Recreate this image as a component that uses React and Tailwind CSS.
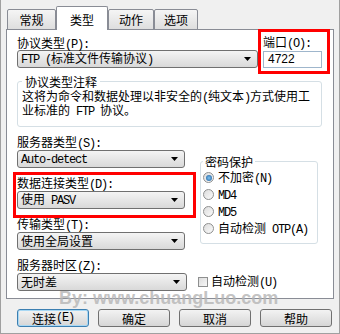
import React from 'react';

// ASCII runs are drawn in a narrow mono face, like the half-width glyphs of the original
const Txt = ({ s }) =>
  s.split(/([\x20-\x7e]+)/).map((part, i) =>
    /^[\x20-\x7e]+$/.test(part) ? (
      <span key={i} className="font-['Liberation_Mono',monospace] text-[12px] tracking-[-1.2px] whitespace-pre">
        {part}
      </span>
    ) : (
      part
    )
  );

const Tab = ({ label, active, w }) => (
  <div
    className={`flex items-center justify-center border border-[#898c95] rounded-t-[2px] ${w} ${
      active ? 'relative z-10 h-[24px] bg-white border-b-0 pt-[1px]' : 'h-[21px] bg-linear-to-b from-[#f5f5f5] to-[#dedede]'
    }`}
  >
    {label}
  </div>
);

const Select = ({ text, className = '' }) => (
  <div className={`flex items-center h-[18px] rounded-[3px] border border-[#707070] bg-linear-to-b from-[#f4f4f4] to-[#d9d9d9] pl-[3px] pr-[6px] ${className}`}>
    <span className="flex-1 whitespace-nowrap overflow-hidden leading-[16px]">
      <Txt s={text} />
    </span>
    <svg width="7" height="4" viewBox="0 0 7 4">
      <path d="M0 0h7L3.5 4z" fill="#000" />
    </svg>
  </div>
);

const Radio = ({ label, checked }) => (
  <div className="flex items-center h-[17px] gap-[4px]">
    <span className="flex items-center justify-center w-[11px] h-[11px] rounded-full border border-[#8e8f8f] bg-linear-to-br from-[#dcdcdc] to-[#fbfbfb]">
      {checked && <span className="w-[6px] h-[6px] rounded-full bg-radial from-[#7fc3f2] to-[#185c9a]" />}
    </span>
    <span>
      <Txt s={label} />
    </span>
  </div>
);

const Button = ({ label, focused }) => (
  <div
    className={`flex items-center justify-center w-[72px] h-[18px] rounded-[3px] border bg-linear-to-b from-[#f3f3f3] to-[#d6d6d6] ${
      focused ? 'border-[#3c7fb1] shadow-[inset_0_0_0_1px_#a8d8f4]' : 'border-[#707070]'
    }`}
  >
    <Txt s={label} />
  </div>
);

const App = () => {
  return (
    <div className="relative w-[340px] h-[334px] overflow-hidden bg-[#f0f0f0] border-x border-b border-[#a0a0a0] font-['Noto_Sans_CJK_SC',sans-serif] text-[12px] leading-[13px] text-black">
      {/* tabs */}
      <div className="flex items-end h-[30px] pl-[6px]">
        <Tab label="常规" w="w-[49px]" />
        <Tab label="类型" w="w-[52px]" active />
        <Tab label="动作" w="w-[46px]" />
        <Tab label="选项" w="w-[44px]" />
      </div>

      {/* tab panel */}
      <div className="-mt-px mx-[5px] h-[270px] border border-[#898c95] bg-white px-[10px]">
        <div className="flex">
          <div className="w-[241px]">
            <div className="mt-[6px] h-[14px]">
              <Txt s="协议类型(P):" />
            </div>
            <Select text="FTP (标准文件传输协议)" />
          </div>
          <div className="ml-[5px]">
            <div className="mt-[5px] h-[14px]">
              <Txt s="端口(O):" />
            </div>
            <div className="mt-[2px] w-[59px] h-[17px] border border-[#9fb6cc] bg-white pl-[4px] flex items-center font-['Liberation_Sans',sans-serif]">
              4722
            </div>
          </div>
        </div>

        <fieldset className="mt-[7px] w-[305px] h-[52px] border border-[#d5dfe5] rounded-[3px] px-[4px]">
          <legend className="px-[3px] leading-[13px]">协议类型注释</legend>
          <div className="mt-[2px] leading-[12px]">
            这将为命令和数据处理以非安全的<Txt s="(" />纯文本<Txt s=")" />方式使用工
            <br />
            业标准的<Txt s=" FTP " />协议。
          </div>
        </fieldset>

        <div className="flex mt-[6px]">
          <div className="w-[168px]">
            <div className="mt-[2px] h-[13px]">
              <Txt s="服务器类型(S):" />
            </div>
            <Select text="Auto-detect" className="mt-[2px]" />
            <div className="mt-[8px] h-[13px]">
              <Txt s="数据连接类型(D):" />
            </div>
            <Select text="使用 PASV" className="mt-[2px]" />
            <div className="mt-[8px] h-[13px]">
              <Txt s="传输类型(T):" />
            </div>
            <Select text="使用全局设置" className="mt-[2px]" />
            <div className="mt-[8px] h-[13px]">
              <Txt s="服务器时区(Z):" />
            </div>
            <Select text="无时差" className="mt-[2px] w-[170px]" />
          </div>

          <div className="ml-[13px] flex flex-col">
            <fieldset className="mt-[22px] ml-[2px] w-[118px] h-[89px] border border-[#d5dfe5] rounded-[3px] pl-[2px]">
              <legend className="px-[2px]">密码保护</legend>
              <div className="mt-[1px]">
                <Radio label="不加密(N)" checked />
                <Radio label="MD4" />
                <Radio label="MD5" />
                <Radio label="自动检测 OTP(A)" />
              </div>
            </fieldset>
            <div className="mt-auto h-[18px] flex items-center gap-[3px]">
              <span className="w-[10px] h-[10px] border border-[#8e8f8f] bg-linear-to-br from-[#dcdcdc] to-[#f8f8f8]" />
              <span>
                <Txt s="自动检测(U)" />
              </span>
            </div>
          </div>
        </div>
      </div>

      {/* buttons */}
      <div className="flex gap-[9px] pl-[16px] mt-[10px]">
        <Button label="连接(E)" focused />
        <Button label="确定" />
        <Button label="取消" />
        <Button label="帮助" />
      </div>

      {/* annotation boxes */}
      <div className="absolute left-[257px] top-[29px] w-[72px] h-[45px] border-[3px] border-[#ff0000]" />
      <div className="absolute left-[12px] top-[172px] w-[183px] h-[46px] border-[3px] border-[#ff0000]" />

      {/* watermark */}
      <div className="absolute left-[58px] top-[290px] font-['Liberation_Sans',sans-serif] font-bold text-[18px] leading-[16px] text-[#b4b4b4]/80 whitespace-nowrap">
        By: www.chuangLuo.com
      </div>
    </div>
  );
};

export default App;
